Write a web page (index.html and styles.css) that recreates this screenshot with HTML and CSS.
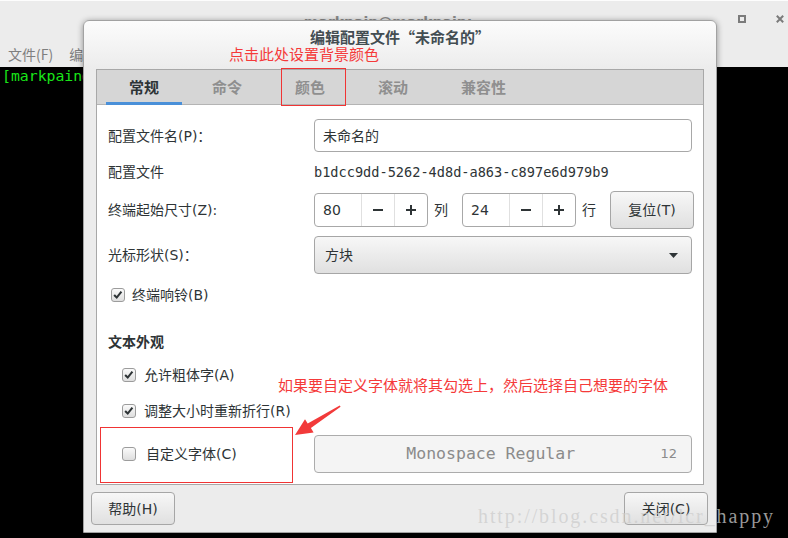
FILE: index.html
```html
<!DOCTYPE html>
<html lang="zh-CN">
<head>
<meta charset="utf-8">
<title>编辑配置文件</title>
<link rel="stylesheet" href="styles.css">
</head>
<body>
<div class="desktop">
  <div class="term">
    <div class="term-head">
      <div></div>
      <div class="term-title">markpain@markpain:~</div>
      <div class="wm-ctrls">
        <svg class="ctl" width="8" height="8" viewBox="0 0 8 8"><rect x="1" y="1" width="6" height="6" fill="none" stroke="#7b7b7b" stroke-width="2"/></svg>
        <svg class="ctl" width="8" height="8" viewBox="0 0 8 8"><path d="M0.8 0.8 L7.2 7.2 M7.2 0.8 L0.8 7.2" stroke="#7b7b7b" stroke-width="2"/></svg>
      </div>
    </div>
    <div class="term-menu"><span>文件(F)</span><span>编辑(E)</span><span>查看(V)</span><span>搜索(S)</span></div>
    <div class="term-body"><span class="pg">[markpain</span><span class="pr">@markpain</span><span class="pg"> ~]$</span></div>
  </div>

  <div class="dialog">
    <div class="dlg-head">编辑配置文件“未命名的”</div>
    <div class="notebook">
      <div class="tabs">
        <div class="tab active">常规</div>
        <div class="tab">命令</div>
        <div class="tab">颜色</div>
        <div class="tab">滚动</div>
        <div class="tab">兼容性</div>
      </div>
      <div class="content">
        <div class="row r1">
          <div class="lbl">配置文件名(P)：</div>
          <div class="entry">未命名的</div>
        </div>
        <div class="row r2">
          <div class="lbl">配置文件</div>
          <div class="uuid">b1dcc9dd-5262-4d8d-a863-c897e6d979b9</div>
        </div>
        <div class="row r3">
          <div class="lbl">终端起始尺寸(Z):</div>
          <div class="sizes">
            <div class="spin">
              <div class="spin-val">80</div>
              <div class="spin-btn"><svg width="10" height="10" viewBox="0 0 10 10"><rect x="0" y="4" width="10" height="2" fill="#2e3436"/></svg></div>
              <div class="spin-btn"><svg width="10" height="10" viewBox="0 0 10 10"><rect x="0" y="4" width="10" height="2" fill="#2e3436"/><rect x="4" y="0" width="2" height="10" fill="#2e3436"/></svg></div>
            </div>
            <span class="unit">列</span>
            <div class="spin">
              <div class="spin-val">24</div>
              <div class="spin-btn"><svg width="10" height="10" viewBox="0 0 10 10"><rect x="0" y="4" width="10" height="2" fill="#2e3436"/></svg></div>
              <div class="spin-btn"><svg width="10" height="10" viewBox="0 0 10 10"><rect x="0" y="4" width="10" height="2" fill="#2e3436"/><rect x="4" y="0" width="2" height="10" fill="#2e3436"/></svg></div>
            </div>
            <span class="unit">行</span>
            <div class="btn reset">复位(T)</div>
          </div>
        </div>
        <div class="row r4">
          <div class="lbl">光标形状(S)：</div>
          <div class="combo"><span>方块</span><svg width="9" height="5" viewBox="0 0 9 5"><path d="M0 0 L9 0 L4.5 5 Z" fill="#2e3436"/></svg></div>
        </div>
        <div class="check-row bell">
          <span class="cb"><svg viewBox="0 0 14 14" width="12" height="12"><path d="M2.5 7 L5.5 10 L11 3" fill="none" stroke="#2e3436" stroke-width="2.4"/></svg></span>
          <span>终端响铃(B)</span>
        </div>
        <div class="heading">文本外观</div>
        <div class="check-row sub">
          <span class="cb"><svg viewBox="0 0 14 14" width="12" height="12"><path d="M2.5 7 L5.5 10 L11 3" fill="none" stroke="#2e3436" stroke-width="2.4"/></svg></span>
          <span>允许粗体字(A)</span>
        </div>
        <div class="check-row sub">
          <span class="cb"><svg viewBox="0 0 14 14" width="12" height="12"><path d="M2.5 7 L5.5 10 L11 3" fill="none" stroke="#2e3436" stroke-width="2.4"/></svg></span>
          <span>调整大小时重新折行(R)</span>
        </div>
        <div class="row r-font">
          <div class="check-row sub custom">
            <span class="cb"></span>
            <span>自定义字体(C)</span>
          </div>
          <div class="fontbtn"><span class="fontname">Monospace Regular</span><span class="fontsize">12</span></div>
        </div>
      </div>
    </div>
    <div class="dlg-foot">
      <div class="btn foot-btn">帮助(H)</div>
      <div class="btn foot-btn">关闭(C)</div>
    </div>
  </div>

  <div class="note note1">点击此处设置背景颜色</div>
  <div class="mark mark1"></div>
  <div class="note note2">如果要自定义字体就将其勾选上，然后选择自己想要的字体</div>
  <svg class="arrow" width="50" height="36" viewBox="294 402 50 36"><path d="M339.7 405.5 L340.6 406.8 L310.9 428.1 L313.6 432.4 L295 435 L305 419.3 L307.7 423.5 Z" fill="#f23a3a"/></svg>
  <div class="mark mark2"></div>
  <div class="watermark">http://blog.csdn.net/lcr_happy</div>
</div>
</body>
</html>
```

FILE: styles.css
```css
* { box-sizing: border-box; }
html, body { margin: 0; padding: 0; }
body {
  width: 788px;
  height: 538px;
  overflow: hidden;
  background: #ececec;
  font-family: "DejaVu Sans", "Noto Sans CJK SC", sans-serif;
  color: #2e3436;
}
.desktop { position: relative; width: 788px; height: 538px; overflow: hidden; }

/* background terminal window */
.term { display: flex; flex-direction: column; height: 100%; }
.term-head {
  height: 40px;
  border-top: 1px solid #fdfdfd;
  display: grid;
  grid-template-columns: 1fr auto 1fr;
}
.term-title {
  padding-top: 11px;
  font-size: 14px;
  font-weight: bold;
  line-height: 20px;
  color: #8a8a8a;
}
.wm-ctrls {
  display: flex;
  justify-content: flex-end;
  align-items: flex-start;
  gap: 30px;
  padding: 14px 4px 0 0;
}
.ctl { display: block; }
.term-menu {
  height: 27px;
  display: flex;
  align-items: center;
  gap: 16px;
  padding-left: 8px;
  font-family: "Noto Sans CJK SC", sans-serif;
  font-size: 14px;
  color: #7f7f7f;
}
.term-body {
  flex: 1;
  background: #000;
  padding-left: 2px;
  font-family: "DejaVu Sans Mono", monospace;
  font-size: 14.8px;
  line-height: 18px;
  white-space: pre;
}
.pg { color: #19e619; }
.pr { color: #e52222; }

/* dialog window */
.dialog {
  position: absolute;
  left: 83px;
  top: 20px;
  width: 634px;
  height: 513px;
  border: 1px solid #a2a2a2;
  border-radius: 6px 6px 0 0;
  background: linear-gradient(#fcfcfc 0, #ececec 48px, #ececec 100%);
  box-shadow: 0 1px 6px rgba(0, 0, 0, 0.4);
  display: flex;
  flex-direction: column;
}
.dlg-head {
  height: 48px;
  padding-top: 6px;
  text-align: center;
  font-family: "Noto Sans CJK SC", sans-serif;
  font-size: 15px;
  font-weight: bold;
  line-height: 20px;
  color: #434d52;
}
.notebook {
  margin: 0 12px;
  height: 416px;
  border: 1px solid #a8a8a8;
  display: flex;
  flex-direction: column;
}
.tabs {
  height: 35px;
  flex: none;
  background: #d6d6d6;
  border-bottom: 1px solid #b4b4b4;
  display: flex;
  gap: 7px;
  padding-left: 9px;
}
.tab {
  margin-bottom: -1px;
  padding: 0 23px;
  border-bottom: 3px solid transparent;
  display: flex;
  align-items: center;
  font-family: "Noto Sans CJK SC", sans-serif;
  font-size: 15px;
  font-weight: bold;
  color: #8f8f8f;
}
.tab.active { color: #2e3436; border-bottom-color: #4a90d9; }

.content {
  flex: 1;
  background: #fff;
  padding: 14px 11px 0;
  font-size: 14px;
  line-height: 20px;
}
.row {
  display: grid;
  grid-template-columns: 206px 1fr;
  align-items: center;
}
.lbl { white-space: nowrap; }
.r1 { height: 33px; }
.r2 { height: 39px; }
.r3 { height: 38px; }
.r4 { height: 38px; margin-top: 7px; }
.r-font { height: 38px; margin-top: 6px; }

.entry {
  height: 33px;
  border: 1px solid #a8a8a8;
  border-radius: 4px;
  background: #fff;
  padding-left: 8px;
  display: flex;
  align-items: center;
}
.uuid {
  font-family: "DejaVu Sans Mono", monospace;
  font-size: 13.6px;
}
.sizes { display: flex; align-items: center; gap: 6px; }
.spin {
  height: 34px;
  display: flex;
  border: 1px solid #a8a8a8;
  border-radius: 4px;
  background: #fff;
}
.spin-val { width: 46px; padding-left: 8px; display: flex; align-items: center; }
.spin-btn {
  width: 33px;
  border-left: 1px solid #e0e0e0;
  display: flex;
  align-items: center;
  justify-content: center;
}
.unit { padding-right: 8px; }
.btn {
  border: 1px solid #a6a6a6;
  border-radius: 4px;
  background: linear-gradient(#f7f7f7, #e0e0e0);
  display: flex;
  align-items: center;
  justify-content: center;
  font-size: 14px;
  line-height: 20px;
  color: #2e3436;
}
.reset { width: 84px; height: 38px; }
.combo {
  height: 38px;
  border: 1px solid #a6a6a6;
  border-radius: 4px;
  background: linear-gradient(#f7f7f7, #e0e0e0);
  display: flex;
  align-items: center;
  justify-content: space-between;
  padding: 0 13px 0 10px;
}

.check-row { display: flex; align-items: center; gap: 8px; white-space: nowrap; }
.bell { height: 42px; padding-left: 3px; gap: 7px; }
.sub { height: 36px; padding-left: 14px; }
.custom { height: 38px; gap: 10px; }
.cb {
  width: 14px;
  height: 14px;
  flex: none;
  border: 1px solid #9c9c9c;
  border-radius: 3px;
  background: linear-gradient(#fafafa, #dedede);
  display: flex;
  align-items: center;
  justify-content: center;
}
.heading {
  height: 41px;
  padding-top: 9px;
  line-height: 32px;
  font-weight: bold;
  font-family: "Noto Sans CJK SC", sans-serif;
}
.fontbtn {
  height: 38px;
  border: 1px solid #acacac;
  border-radius: 4px;
  background: #f4f4f4;
  display: flex;
  align-items: center;
  padding: 0 14px;
  color: #8b8b8b;
}
.fontname {
  flex: 1;
  text-align: center;
  font-family: "DejaVu Sans Mono", monospace;
  font-size: 16.5px;
}
.fontsize { margin-left: 8px; font-size: 13px; }

.dlg-foot {
  flex: 1;
  display: flex;
  justify-content: space-between;
  align-items: flex-start;
  padding: 7px 8px 0 7px;
}
.foot-btn { width: 84px; height: 33px; }

/* annotations drawn over the screenshot */
.note {
  position: absolute;
  z-index: 2;
  font-family: "Noto Sans CJK SC", sans-serif;
  font-size: 15px;
  line-height: 20px;
  color: #f53a3a;
  white-space: nowrap;
}
.note1 { left: 229px; top: 44px; }
.note2 { left: 278px; top: 375px; }
.mark { position: absolute; z-index: 2; border: 1px solid #f03434; }
.mark1 { left: 281px; top: 68px; width: 65px; height: 38px; }
.mark2 { left: 100px; top: 427px; width: 193px; height: 56px; }
.arrow { position: absolute; z-index: 2; left: 294px; top: 402px; }
.watermark {
  position: absolute;
  z-index: 3;
  left: 478px;
  top: 504px;
  font-family: "Liberation Serif", serif;
  font-size: 20px;
  line-height: 24px;
  letter-spacing: 1.9px;
  color: rgba(205, 205, 205, 0.75);
  white-space: nowrap;
}
```
